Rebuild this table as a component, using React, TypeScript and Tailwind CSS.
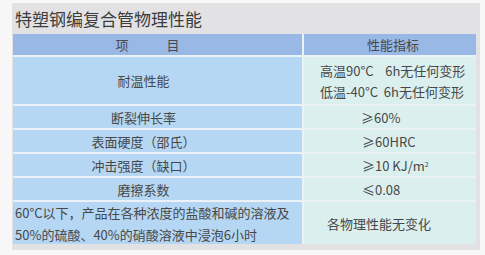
import { Fragment, type ReactNode } from 'react';

const rows: { name: string; value: ReactNode; h: string }[] = [
  {
    name: '耐温性能',
    h: 'h-[47px]',
    value: (
      <div className="flex flex-col gap-[8px] pl-[16px]">
        <span>高温90°C&nbsp;&nbsp;&nbsp;&nbsp;6h无任何变形</span>
        <span>低温-40°C&nbsp;&nbsp;6h无任何变形</span>
      </div>
    ),
  },
  { name: '断裂伸长率', h: 'h-[22px]', value: <span className="pl-[57px]">≥60%</span> },
  { name: '表面硬度（邵氏）', h: 'h-[22px]', value: <span className="pl-[58px]">≥60HRC</span> },
  {
    name: '冲击强度（缺口）',
    h: 'h-[22px]',
    value: (
      <span className="pl-[58px]">
        ≥10 KJ/m<sup className="text-[7px]">2</sup>
      </span>
    ),
  },
  { name: '磨擦系数', h: 'h-[22px]', value: <span className="pl-[58px]">≤0.08</span> },
];

export default function App() {
  return (
    <div
      className="w-[485px] h-[255px] bg-[#f7f7f7] pt-[3px] pl-[12px] text-[#484848]"
      style={{ fontFamily: '"Noto Sans CJK SC", "Noto Sans", sans-serif' }}
    >
      <div className="w-[468px] h-[247px] bg-[#e2e2e4]">
        <div className="h-[31px] pl-[3px] flex items-center text-[17px] leading-none text-[#3c3c3c]">
          特塑钢编复合管物理性能
        </div>
        <div className="ml-[1px] w-[463px] grid grid-cols-[289px_172px] gap-[2px] bg-[#eaf2f6] text-[13px] leading-none">
          <div className="h-[21px] bg-[#9ab8e6] flex items-center justify-center pr-[20px]">
            项&nbsp;&nbsp;&nbsp;&nbsp;&nbsp;&nbsp;&nbsp;&nbsp;&nbsp;&nbsp;&nbsp;&nbsp;&nbsp;目
          </div>
          <div className="h-[21px] bg-[#9ab8e6] flex items-center justify-center pl-[6px]">性能指标</div>
          {rows.map((r) => (
            <Fragment key={r.name}>
              <div className={`${r.h} bg-[#b5d7f3] flex items-center justify-center pr-[28px]`}>{r.name}</div>
              <div className={`${r.h} bg-[#daefee] flex items-center`}>{r.value}</div>
            </Fragment>
          ))}
          <div className="h-[42px] bg-[#b5d7f3] flex flex-col justify-center gap-[9px] pl-[2px]">
            <span>60°C以下，产品在各种浓度的盐酸和碱的溶液及</span>
            <span>50%的硫酸、40%的硝酸溶液中浸泡6小时</span>
          </div>
          <div className="h-[42px] bg-[#daefee] flex items-center pl-[23px]">各物理性能无变化</div>
        </div>
      </div>
    </div>
  );
}
